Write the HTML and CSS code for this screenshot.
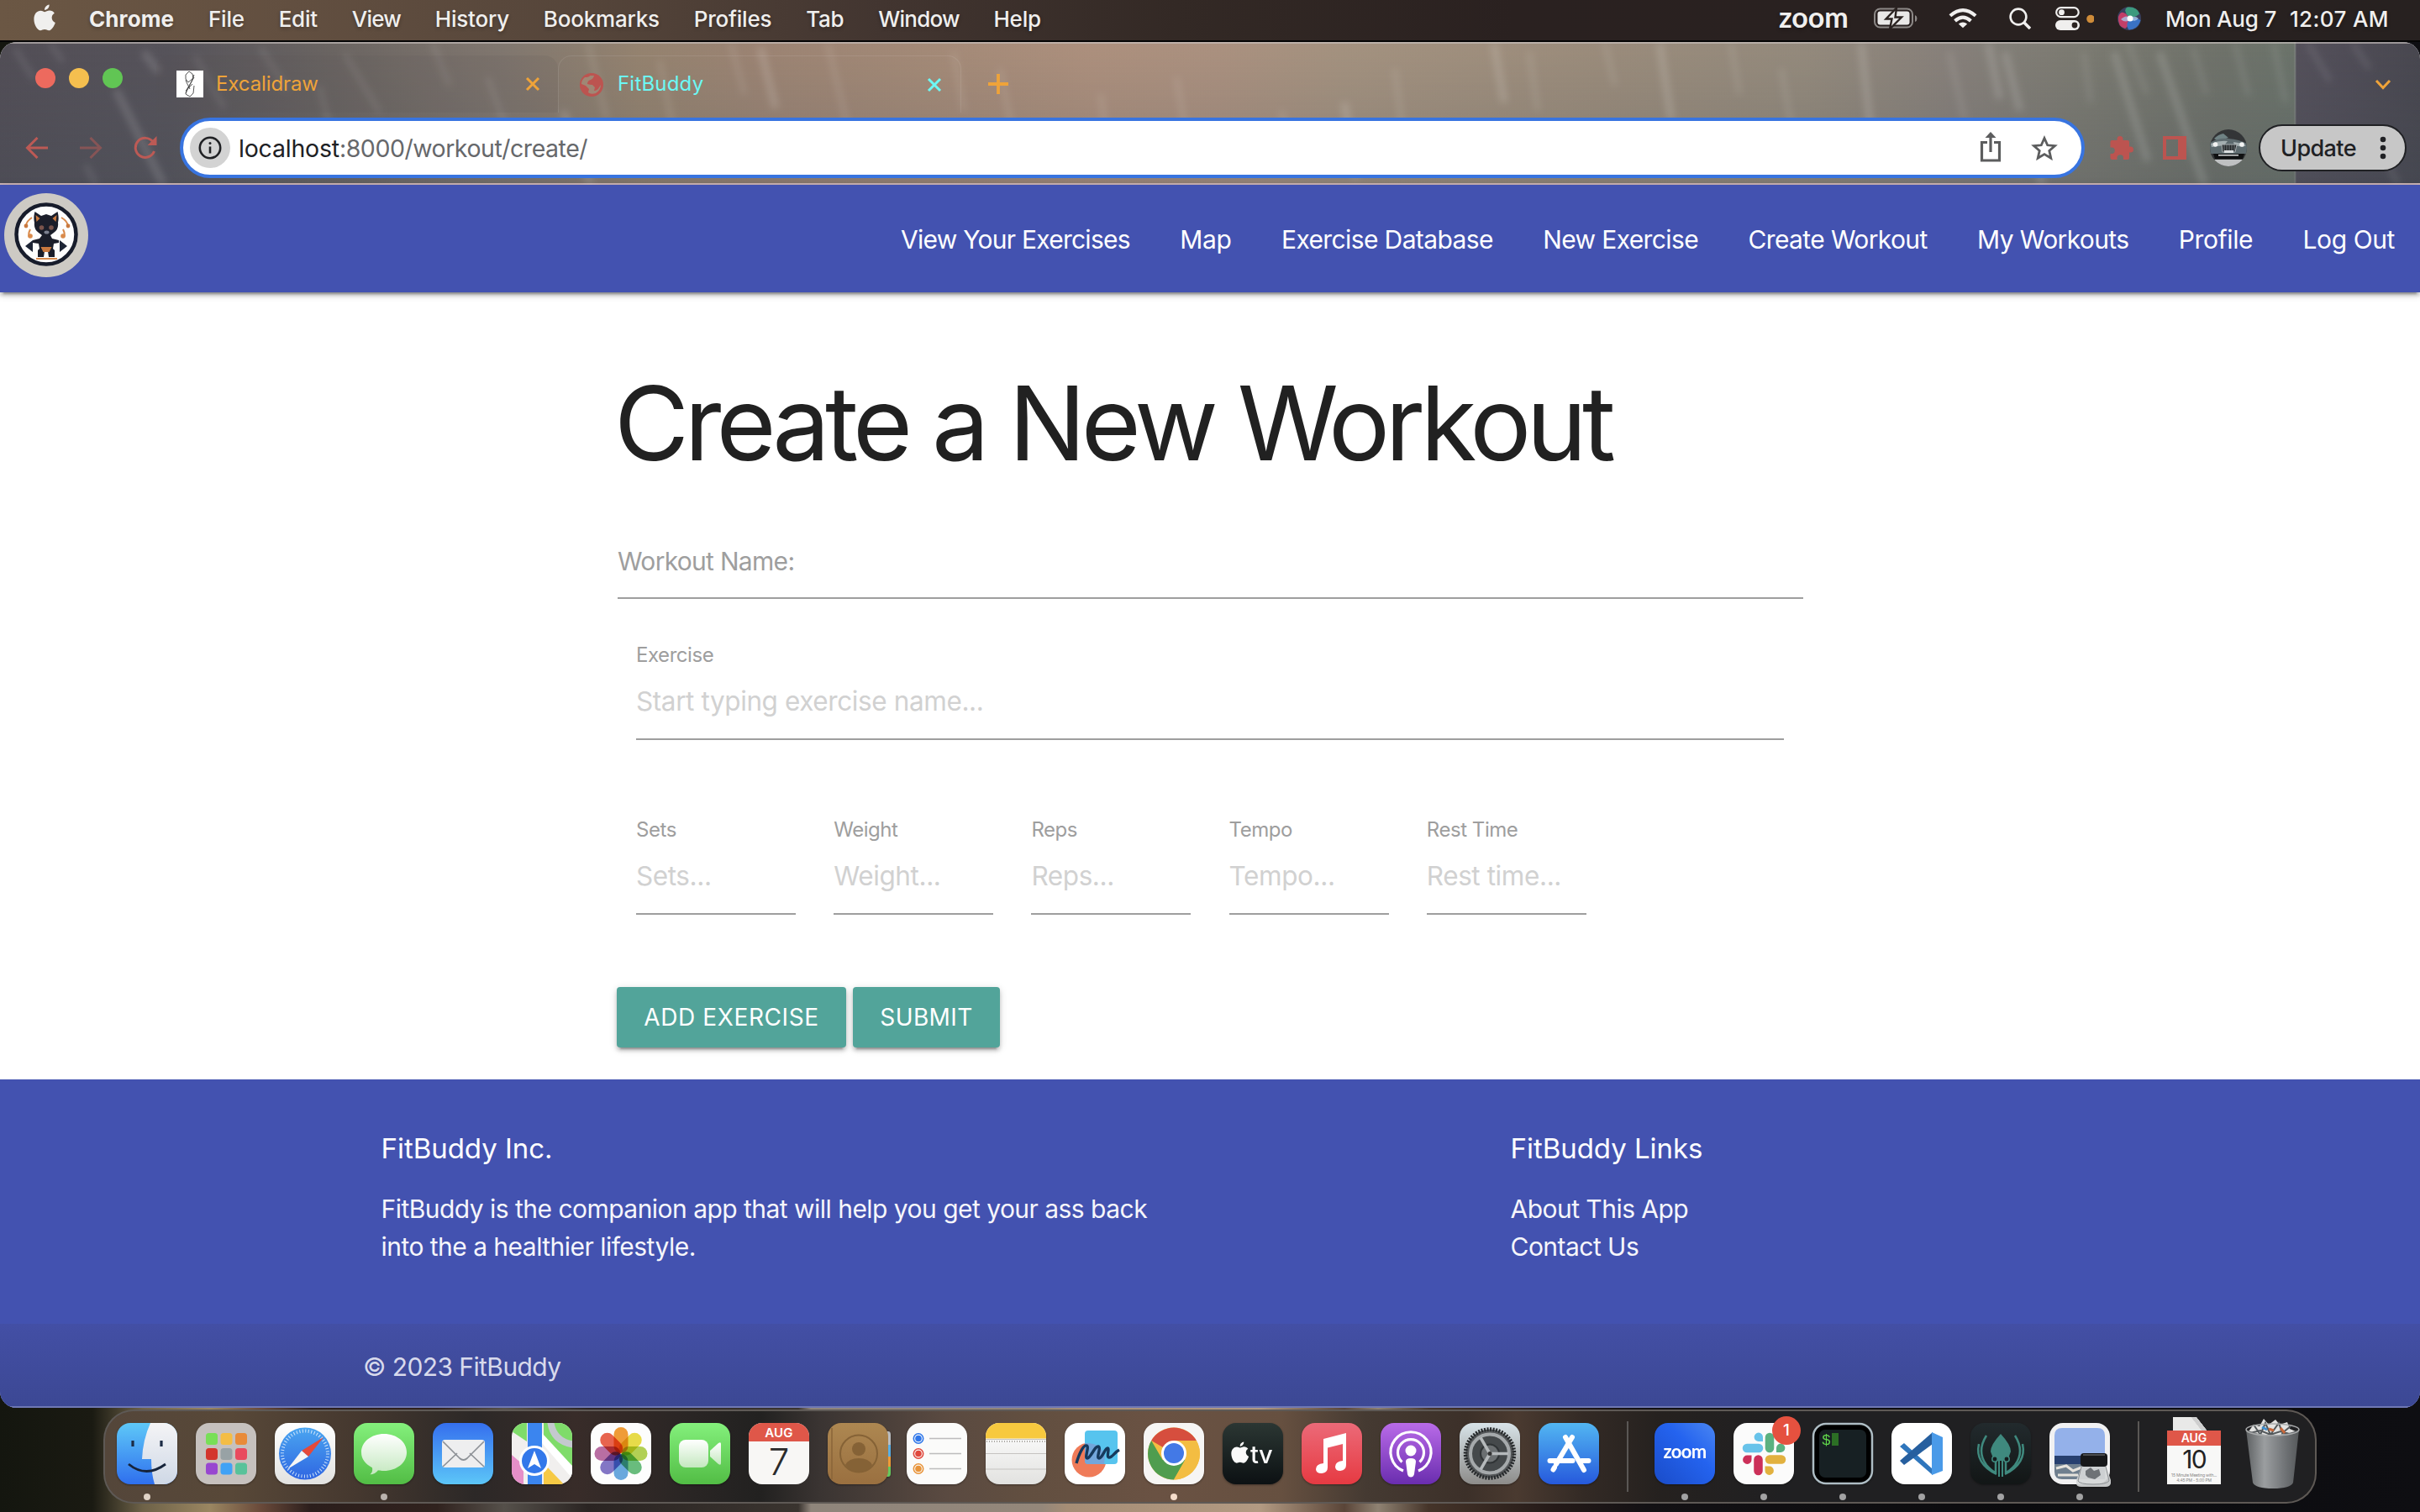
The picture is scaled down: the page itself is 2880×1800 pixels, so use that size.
FILE: index.html
```html
<!DOCTYPE html>
<html lang="en">
<head>
<meta charset="utf-8">
<title>FitBuddy</title>
<link rel="stylesheet" href="styles.css">
</head>
<body>
<svg class="defs" width="0" height="0" aria-hidden="true">
  <defs>
    <linearGradient id="gFinder" x2="0" y2="1"><stop stop-color="#5ec8f8"/><stop offset="1" stop-color="#2f6fee"/></linearGradient>
    <linearGradient id="gFinderR" x2="0" y2="1"><stop stop-color="#f4f4f6"/><stop offset="1" stop-color="#cfd8e6"/></linearGradient>
    <linearGradient id="gWhite" x2="0" y2="1"><stop stop-color="#fff"/><stop offset="1" stop-color="#e2e2e0"/></linearGradient>
    <linearGradient id="gBubble" x2="0" y2="1"><stop stop-color="#fff"/><stop offset="1" stop-color="#c4e8bf"/></linearGradient>
    <linearGradient id="gBlue" x2="0" y2="1"><stop stop-color="#4aa5f0"/><stop offset="1" stop-color="#2f66e2"/></linearGradient>
    <linearGradient id="gGreen" x2="0" y2="1"><stop stop-color="#84f07c"/><stop offset="1" stop-color="#52bd45"/></linearGradient>
    <linearGradient id="gMail" x2="0" y2="1"><stop stop-color="#356fee"/><stop offset="1" stop-color="#5cc6f8"/></linearGradient>
    <linearGradient id="gBrown" x2="0" y2="1"><stop stop-color="#ad8751"/><stop offset="1" stop-color="#9a7040"/></linearGradient>
    <linearGradient id="gTv" x2="0" y2="1"><stop stop-color="#2b3633"/><stop offset="1" stop-color="#0c1113"/></linearGradient>
    <linearGradient id="gMusic" x2="0" y2="1"><stop stop-color="#ec6a78"/><stop offset="1" stop-color="#e63a42"/></linearGradient>
    <linearGradient id="gPod" x2="0" y2="1"><stop stop-color="#b96be8"/><stop offset="1" stop-color="#6a2daf"/></linearGradient>
    <linearGradient id="gSet" x2="0" y2="1"><stop stop-color="#d8e3e8"/><stop offset="1" stop-color="#8d8c8a"/></linearGradient>
    <linearGradient id="gStore" x2="0" y2="1"><stop stop-color="#52b6f2"/><stop offset="1" stop-color="#2659dc"/></linearGradient>
    <linearGradient id="gZoom" x1="1" x2="0" y2="1"><stop stop-color="#4a86f2"/><stop offset=".4" stop-color="#2463ef"/><stop offset="1" stop-color="#1a4cc8"/></linearGradient>
    <linearGradient id="gKraken" x2="0" y2="1"><stop stop-color="#222a2d"/><stop offset="1" stop-color="#121616"/></linearGradient>
    <linearGradient id="gCan" x2="1"><stop stop-color="#5e6163"/><stop offset=".35" stop-color="#9b9ea0"/><stop offset=".7" stop-color="#74777a"/><stop offset="1" stop-color="#55585a"/></linearGradient>
    <radialGradient id="gSiri"><stop stop-color="#fff"/><stop offset=".35" stop-color="#8fb7dc"/><stop offset=".7" stop-color="#4868a8"/><stop offset="1" stop-color="#39405e"/></radialGradient>
    <filter id="soft" x="-5%" y="-5%" width="110%" height="110%"><feGaussianBlur stdDeviation="4"/></filter>
    <clipPath id="tile"><rect width="72" height="73" rx="16"/></clipPath>
    <clipPath id="round44"><circle cx="22" cy="22" r="22"/></clipPath>
  </defs>
</svg>

<header class="menubar">
  <svg class="apple" width="26" height="33" viewBox="0 0 26 33"><path fill="#f0efee" d="M18.6.5c.3 3.300-2.300 6.300-5.500 6.500C12.700 3.900 15.500.9 18.600.500zM13.300 9.200c1.400 0 3.100-1.600 5.700-1.600 2.300 0 4.600 1.200 5.800 3.200-4.700 2.600-3.900 9.200 1 11.100-1.500 4.400-4.600 9.400-7.700 9.400-2 0-2.700-1.200-5-1.200s-3.200 1.200-5 1.200C4.600 31.300.4 24.600.4 17.800c0-6.400 3.900-10 8-10 2.300 0 3.800 1.400 4.900 1.400z"/></svg>
  <nav class="menus">
    <b>Chrome</b><span>File</span><span>Edit</span><span class="tight">View</span><span>History</span><span>Bookmarks</span><span>Profiles</span><span>Tab</span><span class="tight">Window</span><span>Help</span>
  </nav>
  <div class="status">
    <span class="zoom-word">zoom</span>
    <svg class="battery" width="52" height="26" viewBox="0 0 52 26"><rect x="1" y="1.500" width="45" height="22" rx="6.500" fill="none" stroke="#8d8987" stroke-width="2"/><path d="M49 9v8q2.500-1 2.500-4T49 9z" fill="#8d8987"/><rect x="4.500" y="4.500" width="38" height="16" rx="3" fill="#e9e8e7"/><path d="M27 .5 14.500 13.500h7L19 25.500 33 11.500h-7.500z" fill="#e9e8e7" stroke="#2a2220" stroke-width="2.400"/></svg>
    <svg class="wifi" width="34" height="26" viewBox="0 0 36 26" fill="none" stroke="#f0efee" stroke-width="4.400"><path d="M2 9.500q16-14 32 0M8 16q10-9 20 0"/><path d="M18 25l-5.500-5q5.500-4.500 11 0z" fill="#f0efee" stroke="none"/></svg>
    <svg class="search" width="26" height="26" viewBox="0 0 26 26" fill="none" stroke="#f0efee" stroke-width="2.600"><circle cx="11" cy="11" r="9.400"/><path d="M18 18l7 7" stroke-width="3.600"/></svg>
    <svg class="control" width="46" height="28" viewBox="0 0 46 28"><rect x="1.200" y="1.200" width="26.500" height="11" rx="5.500" fill="none" stroke="#f0efee" stroke-width="2.200"/><circle cx="7.500" cy="6.700" r="3.400" fill="#f0efee"/><rect y="16" width="29" height="12" rx="6" fill="#f0efee"/><circle cx="23" cy="22" r="3.400" fill="#2a2220"/><circle cx="42" cy="14.500" r="4.800" fill="#cf8c39"/></svg>
    <svg class="siri" width="28" height="28" viewBox="0 0 28 28"><circle cx="14" cy="14" r="14" fill="#39405e"/><path d="M14 13Q5 1 1 12q-1 12 8 14 6-4 5-13z" fill="#c23f68"/><path d="M13 12Q6 3 12 .5q11-1 14 8-5 5-13 3.500z" fill="#3c9a7e"/><path d="M14 15q8-3 13.500 1-3 11-14 11.500Q9 22 14 15z" fill="#3a72c4"/><path d="M4 15q6-6 11-2 6-3 10 1-5 5-10 1-5 5-11 0z" fill="#a8c4e6" opacity=".8"/><circle cx="15" cy="14" r="3.500" fill="#fff"/></svg>
    <span class="date">Mon Aug 7</span><span class="time">12:07 AM</span>
  </div>
</header>

<section class="window">
  <div class="chrome">
    <svg class="streaks" width="2880" height="168" viewBox="0 0 2880 168" preserveAspectRatio="none" fill="none" stroke="#fff" filter="url(#soft)">
      <path stroke-width="6" opacity=".1" d="M18 6l22 36M60 0l15 22M232 15l35 62M310 5l32 50M410 12l42 70M380 50l15 60M102 144l20 40M515 0l20 50M580 40l26 70M700 0l22 90M785 20l18 90M870 0l16 60M985 0l24 100M1135 10l12 70M1190 30l14 70M1310 60l10 80M1400 40l12 70M1525 80l14 60M1660 30l10 80M1820 10l10 70M1910 0l12 50M2060 0l10 60M2120 30l12 70M2320 10l18 80M2480 10l8 60M2533 0l22 60M2610 5l16 55M2660 0l16 62M2706 0l14 70M2747 0l26 45M2800 0l20 30M2840 140l20 40"/>
      <path stroke-width="9" opacity=".14" d="M171 10l18 24M138 55l60 120M905 5l18 72M670 80l34 90M1600 70l14 90M1778 0l12 70M1975 0l14 90M2215 0l12 110M2366 0l14 66M2386 10l18 70M2516 10l40 130M2570 10l54 160M2420 100l10 70"/>
    </svg>
    <div class="tabs">
      <div class="lights"><i class="red"></i><i class="yellow"></i><i class="green"></i></div>
      <div class="tab">
        <svg width="32" height="32" viewBox="0 0 32 32"><path fill="#fff" d="M0 0h32v32H0z"/><path d="M11 5l4-4 4 3 1 5-6 5-3-4zM12 14l-1-3M12 14l4 8M21 5l-3 8-7 14M19 16l-8 8M21 18l-1 9-4 4-5-3 1-5 9-15" fill="none" stroke="#444" stroke-width=".9"/></svg>
        <span>Excalidraw</span>
        <svg class="x" width="18" height="18" viewBox="0 0 18 18"><path d="M2 2l14 14M16 2L2 16" stroke="#efa339" stroke-width="3"/></svg>
      </div>
      <div class="tab active">
        <svg width="28" height="28" viewBox="0 0 28 28"><circle cx="14" cy="14" r="14" fill="#bc5450"/><path d="M17 3q-1 4-4 5-4 1-4 5 3 1 6 1l3 3-1 4q4 0 6-4l2-3q0 6-6 10-6 2-9-1l1-4-4-4-5-2q0-5 4-8 5 0 6-2z" fill="#a08775"/></svg>
        <span>FitBuddy</span>
        <svg class="x" width="18" height="18" viewBox="0 0 18 18"><path d="M2 2l14 14M16 2L2 16" stroke="#6cf8f5" stroke-width="3"/></svg>
      </div>
      <svg class="plus" width="24" height="24" viewBox="0 0 24 24"><path d="M12 0v24M0 12h24" stroke="#efa339" stroke-width="3.800"/></svg>
      <svg class="chev" width="20" height="14" viewBox="0 0 20 14"><path d="M2 2l8 8.500L18 2" fill="none" stroke="#efa339" stroke-width="3"/></svg>
    </div>
    <div class="toolbar">
      <svg class="back" width="28" height="26" viewBox="0 0 28 26" fill="none" stroke="#bc5a55" stroke-width="3"><path d="M27 13H3M14.500 1L2.500 13l12 12"/></svg>
      <svg class="fwd" width="28" height="26" viewBox="0 0 28 26" fill="none" stroke="#bc5a55" stroke-width="3" opacity=".5"><path d="M0 13h24M12.500 1l12 12-12 12"/></svg>
      <svg class="reload" width="28" height="28" viewBox="0 0 28 28" fill="none" stroke="#bc5a55" stroke-width="3"><path d="M24.500 18a11.500 11.500 0 1 1-1.500-11"/><path d="M27.500 0v11h-11z" fill="#bc5a55" stroke="none"/></svg>
      <div class="omnibox">
        <span class="info"><svg width="28" height="28" viewBox="0 0 28 28" fill="none" stroke="#202124" stroke-width="2.600"><circle cx="14" cy="14" r="12.200"/><path d="M14 12.500v8" /><circle cx="14" cy="8.500" r="1.500" fill="#202124" stroke="none"/></svg></span>
        <span class="url"><em>localhost</em>:8000/workout/create/</span>
        <svg class="share" width="26" height="36" viewBox="0 0 26 36" fill="none" stroke="#5c5d5e" stroke-width="3.200"><path d="M9 12.500H2.500V34h21V12.500H17M13 24V4"/><path d="M13 0l6.500 7h-13z" fill="#5c5d5e" stroke="none"/></svg>
        <svg class="star" width="32" height="30" viewBox="0 0 32 30"><path d="M16 3.500l3.700 8.300 8.800.8-6.700 5.900 2 8.800-7.800-4.700-7.800 4.700 2-8.800-6.700-5.900 8.800-.8z" fill="none" stroke="#5c5d5e" stroke-width="2.800"/></svg>
      </div>
      <svg class="puzzle" width="28" height="28" viewBox="0 0 28 28"><path fill="#bc5450" d="M8.500 5V3.500a3.500 3.500 0 0 1 7 0V5H21q2 0 2 2v5.500h1.500a3.500 3.500 0 0 1 0 7H23V26q0 2-2 2h-5v-2a3.700 3.700 0 0 0-7.500 0v2H2.500q-2 0-2-2v-5H2a3.700 3.700 0 0 0 0-7.500H.5V7q0-2 2-2z"/></svg>
      <svg class="panel" width="28" height="28" viewBox="0 0 28 28"><path fill="#bc5450" fill-rule="evenodd" d="M0 0h28v28H0zM4 4v20h14V4z"/></svg>
      <svg class="avatar" width="44" height="44" viewBox="0 0 44 44"><g clip-path="url(#round44)"><path fill="#333537" d="M0 0h44v44H0z"/><path fill="#6f8284" d="M5 11q5-5 11-6l6 5-12 4z"/><path fill="#5d6a6e" d="M0 16q9-6 22-5t22 6v12H0z"/><path fill="#a3aeb0" d="M1 17q10-4 20-3l-4 5-15 2zM28 15q9 1 15 4l-4 2-10-2z"/><path fill="#25292b" stroke="#aab1b3" d="M14 18h18l-2 9H15z"/><path d="M17 18v9M20 18v9M23 18v9M26 18v9M29 18v9" stroke="#8b9294" stroke-width=".8"/><path fill="#0f1011" d="M4 29h37l-2 6H6z"/><path fill="#bfc1c2" d="M5 36h36l-6 8H10z"/><path fill="#d9dcdd" d="M17 25h11v3H17zM10 30h24v1.500H10z"/><circle cx="6.500" cy="18" r="2.800" fill="#f3f3f3"/><circle cx="38" cy="18" r="2.800" fill="#f3f3f3"/></g></svg>
      <div class="update"><span>Update</span><svg width="8" height="28" viewBox="0 0 8 28" fill="#202124"><circle cx="4" cy="4" r="3.300"/><circle cx="4" cy="14" r="3.300"/><circle cx="4" cy="24" r="3.300"/></svg></div>
    </div>
  </div>

  <nav class="navbar">
    <svg class="logo" width="100" height="100" viewBox="0 0 100 100"><circle cx="50" cy="50" r="50" fill="#cdcac4"/><circle cx="50" cy="49" r="35.500" fill="#fdfdfd" stroke="#171c2b" stroke-width="4.500"/>
      <path fill="#1b1e2a" d="M36.500 22l7.500 5 6-2 6 2 7.500-5q2 7 .5 13 1 8-5 12l-4 3 2 4 8 2v3l-6 1-1 6 2 2v8h-7l-1-7-2-2-2 2-1 7h-7v-8l2-2-1-6-7-1v-3l8-2 3-4-4-3q-6-4-5-12-1.500-6 .5-13z"/>
      <path fill="#c9793f" d="M37.500 26l5 4-4 4zM62.500 26l-5 4 4 4zM43.500 64h13l-3 6h-7z"/><path fill="#1d2435" d="M34 56v14l-9-7zM66 56v14l9-7z"/>
      <circle cx="44.500" cy="41" r="2.800" fill="#7a544c"/><circle cx="56" cy="41" r="2.800" fill="#7a544c"/><ellipse cx="50.500" cy="46.500" rx="3" ry="2" fill="#7c8190"/><path d="M33 29q-6 4-7 9M68 29q7 4 8 10M31 43q-3 6-1 9M70 43q3 6 1 9M38 78h25" fill="none" stroke="#d98a4b" stroke-width="2"/><circle cx="26" cy="39" r="2.400" fill="#c9793f"/><circle cx="76" cy="39" r="2.400" fill="#c9793f"/><circle cx="31" cy="51" r="2.800" fill="#d98a4b"/><circle cx="70" cy="51" r="2.800" fill="#d98a4b"/></svg>
    <div class="links"><a class="l1">View Your Exercises</a><a class="l0">Map</a><a>Exercise Database</a><a>New Exercise</a><a>Create Workout</a><a>My Workouts</a><a class="l2">Profile</a><a class="l2">Log Out</a></div>
  </nav>

  <main class="page">
    <h1>Create a New Workout</h1>
    <div class="name-field">Workout Name:</div>
    <div class="exercise">
      <div class="field"><label>Exercise</label><span>Start typing exercise name...</span></div>
      <div class="row">
        <div class="field"><label>Sets</label><span>Sets...</span></div>
        <div class="field"><label>Weight</label><span>Weight...</span></div>
        <div class="field"><label>Reps</label><span>Reps...</span></div>
        <div class="field"><label>Tempo</label><span>Tempo...</span></div>
        <div class="field"><label>Rest Time</label><span>Rest time...</span></div>
      </div>
    </div>
    <div class="buttons"><button>ADD EXERCISE</button><button class="submit">SUBMIT</button></div>
  </main>

  <footer class="footer">
    <div class="cols">
      <div><h5>FitBuddy Inc.</h5><p>FitBuddy is the companion app that will help you get your ass back<br>into the a healthier lifestyle.</p></div>
      <div><h5>FitBuddy Links</h5><p>About This App<br>Contact Us</p></div>
    </div>
    <div class="copyright">© 2023 FitBuddy</div>
  </footer>
</section>

<section class="dock">
  <div class="app run"><svg viewBox="0 0 72 73"><g clip-path="url(#tile)"><path fill="url(#gFinder)" d="M0 0h72v73H0z"/><path fill="url(#gFinderR)" d="M40 0Q31 20 30 43h11q0 17 4 30h27V0z"/></g><path d="M19 21v7M53 21v7" stroke="#1c2b45" stroke-width="3.200"/><path d="M14 49q21 17 44 0" fill="none" stroke="#16233a" stroke-width="2.800"/></svg></div>
  <div class="app"><svg viewBox="0 0 72 73"><rect width="72" height="73" rx="16" fill="#c6c1be"/><g><rect x="12" y="12" width="14" height="14" rx="3.500" fill="#78df57"/><rect x="29.500" y="12" width="14" height="14" rx="3.500" fill="#f4bd45"/><rect x="47" y="12" width="14" height="14" rx="3.500" fill="#e98b39"/><rect x="12" y="30" width="14" height="14" rx="3.500" fill="#d3352c"/><rect x="29.500" y="30" width="14" height="14" rx="3.500" fill="#98a2a5"/><rect x="47" y="30" width="14" height="14" rx="3.500" fill="#e94a5e"/><rect x="12" y="47.500" width="14" height="14" rx="3.500" fill="#9847d0"/><rect x="29.500" y="47.500" width="14" height="14" rx="3.500" fill="#41a2f5"/><rect x="47" y="47.500" width="14" height="14" rx="3.500" fill="#58c29a"/></g></svg></div>
  <div class="app"><svg viewBox="0 0 72 73"><rect width="72" height="73" rx="16" fill="url(#gWhite)"/><circle cx="36" cy="36.500" r="31" fill="url(#gBlue)"/><circle cx="36" cy="36.500" r="27" fill="none" stroke="#cfe4fa" stroke-width="4" stroke-dasharray="1 2.530"/><path fill="#e5493a" d="M58 17L32 33l8 7z"/><path fill="#f5f5f5" d="M15 55l17-22 8 7z"/></svg></div>
  <div class="app run dim"><svg viewBox="0 0 72 73"><rect width="72" height="73" rx="16" fill="url(#gGreen)"/><path fill="url(#gBubble)" d="M36 13c15 0 27 9.500 27 22S51 57 36 57c-3 0-5 0-7-.7-2 3-6 5-9.500 5 2.500-2 3-5 2.500-8C14 49 9 43 9 35c0-12.500 12-22 27-22z"/></svg></div>
  <div class="app"><svg viewBox="0 0 72 73"><rect width="72" height="73" rx="16" fill="url(#gMail)"/><rect x="11" y="20" width="51" height="33" rx="3.500" fill="#eeeeef"/><path d="M12 22l20 20q4.500 4 9 0l20-20M12 52l17-16M61 52L44 36" fill="none" stroke="#8d9196" stroke-width="1.700"/></svg></div>
  <div class="app"><svg viewBox="0 0 72 73"><g clip-path="url(#tile)"><path fill="#f1efee" d="M0 0h72v73H0z"/><path fill="#7fdc6a" d="M0 0h18v22L0 10zM38 0h34v60L38 24z"/><path fill="#e58fc8" d="M0 38l14 12v23H0z"/><path fill="#3b85ef" d="M19 0h17v73H19z"/><path fill="#fff" d="M36 24l36 42v-15L36 12z"/><path fill="#f6c945" d="M38 48l24 25H38z"/><path d="M46-4q2 27 30 30" fill="none" stroke="#c4c9cf" stroke-width="8"/><circle cx="27" cy="45" r="18" fill="#fff"/><circle cx="27" cy="45" r="15" fill="#3378ea"/><path fill="#fff" d="M27 33l8 21-8-5-8 5z"/></g></svg></div>
  <div class="app"><svg viewBox="0 0 72 73"><rect width="72" height="73" rx="16" fill="#fdfdfd"/><g class="petals"><rect x="27.500" y="5" width="17" height="31" rx="8.500" fill="#f1982d"/><rect x="27.500" y="5" width="17" height="31" rx="8.500" fill="#e8dc3f" transform="rotate(45 36 36.500)"/><rect x="27.500" y="5" width="17" height="31" rx="8.500" fill="#b0d04b" transform="rotate(90 36 36.500)"/><rect x="27.500" y="5" width="17" height="31" rx="8.500" fill="#62bb77" transform="rotate(135 36 36.500)"/><rect x="27.500" y="5" width="17" height="31" rx="8.500" fill="#62a5de" transform="rotate(180 36 36.500)"/><rect x="27.500" y="5" width="17" height="31" rx="8.500" fill="#7d70c4" transform="rotate(225 36 36.500)"/><rect x="27.500" y="5" width="17" height="31" rx="8.500" fill="#b8679f" transform="rotate(270 36 36.500)"/><rect x="27.500" y="5" width="17" height="31" rx="8.500" fill="#e85d44" transform="rotate(315 36 36.500)"/></g></svg></div>
  <div class="app"><svg viewBox="0 0 72 73"><rect width="72" height="73" rx="16" fill="url(#gGreen)"/><rect x="11" y="20" width="35" height="33" rx="8" fill="url(#gBubble)"/><path fill="url(#gBubble)" d="M48 33l10-9q3-2 3 1v23q0 3-3 1l-10-9z"/></svg></div>
  <div class="app cal"><span class="mon">AUG</span><span class="day">7</span></div>
  <div class="app"><svg viewBox="0 0 76 73"><path fill="#b9bcc0" d="M66 10h6q3 0 3 4v12h-9z"/><path fill="#58aee4" d="M66 26h9v14h-9z"/><path fill="#ee9a36" d="M66 40h9v12h-9z"/><path fill="#65c95d" d="M66 52h9v8q0 4-3 4h-6z"/><rect width="72" height="73" rx="16" fill="url(#gBrown)"/><path d="M5 6v61" stroke="#8a6538" stroke-width="1.500"/><circle cx="37" cy="36.500" r="22" fill="none" stroke="#856236" stroke-width="2"/><circle cx="37" cy="31" r="8" fill="#856236"/><path fill="#856236" d="M21 50q4-8 16-8t16 8q-6 8.500-16 8.500T21 50z"/></svg></div>
  <div class="app"><svg viewBox="0 0 72 73"><rect width="72" height="73" rx="16" fill="#fbfbfa"/><path d="M27 18.500h38M27 36.500h38M27 54.500h38" stroke="#bdbcbd" stroke-width="1.600"/><g fill="none" stroke-width="1.600"><circle cx="14" cy="18.500" r="5.700" stroke="#2f77ea"/><circle cx="14" cy="36.500" r="5.700" stroke="#e0483d"/><circle cx="14" cy="54.500" r="5.700" stroke="#e8943a"/></g><circle cx="14" cy="18.500" r="3.800" fill="#2f77ea"/><circle cx="14" cy="36.500" r="3.800" fill="#e0483d"/><circle cx="14" cy="54.500" r="3.800" fill="#e8943a"/></svg></div>
  <div class="app"><svg viewBox="0 0 72 73"><g clip-path="url(#tile)"><path fill="url(#gWhite)" d="M0 0h72v73H0z"/><path fill="#f7c93f" d="M0 0h72v18.500H0z"/></g><path d="M0 19.500h72M0 36.500h72M0 55h72" stroke="#c5c3c0" stroke-width="1.200"/><path d="M1 22h70" stroke="#aaa7a2" stroke-width="2" stroke-dasharray="1 2"/></svg></div>
  <div class="app"><svg viewBox="0 0 72 73"><rect width="72" height="73" rx="16" fill="#fff"/><circle cx="29" cy="44" r="20.500" fill="#ef7b59"/><rect x="24" y="9" width="39" height="40" rx="4" fill="#57c4ee"/><path fill="#7a9fd6" d="M24 24q19-1 24 15l-1 10H28q-4 0-4-4z" opacity=".8"/><path d="M14 48c4-14 9-22 12-21 4 1-3 15 1 15s9-15 13-14-3 14 1 14 7-12 10-12-2 11 2 11 6-6 12-9" fill="none" stroke="#16395c" stroke-width="3.400"/></svg></div>
  <div class="app run warm"><svg viewBox="0 0 72 73"><rect width="72" height="73" rx="16" fill="#f6f5f4"/><circle cx="36" cy="36.500" r="31" fill="#f3bd42"/><path fill="#d64e3e" d="M36 36.500L9.200 21A31 31 0 0 1 62.800 21H36z"/><path fill="#4f9d4f" d="M9.200 21A31 31 0 0 0 36 67.500L49.400 44 36 36.500 22.600 44z"/><path fill="#f3bd42" d="M62.800 21A31 31 0 0 1 36 67.500L49.400 44 48 21z"/><circle cx="36" cy="36" r="15" fill="#fff"/><circle cx="36" cy="36" r="12" fill="#4379e6"/></svg></div>
  <div class="app tv"><svg viewBox="0 0 72 73"><rect width="72" height="73" rx="16" fill="url(#gTv)"/><path fill="#fafafa" transform="translate(10 22) scale(.82)" d="M18.600.500c.3 3.300-2.300 6.300-5.500 6.500C12.700 3.900 15.500.9 18.600.500zM13.300 9.200c1.400 0 3.100-1.600 5.700-1.600 2.300 0 4.600 1.200 5.800 3.200-4.700 2.600-3.900 9.200 1 11.100-1.500 4.400-4.600 9.400-7.700 9.400-2 0-2.700-1.200-5-1.200s-3.200 1.200-5 1.200C4.600 31.300.4 24.600.4 17.800c0-6.400 3.900-10 8-10 2.300 0 3.800 1.400 4.900 1.400z"/><text x="33" y="48" class="tvt">tv</text></svg></div>
  <div class="app"><svg viewBox="0 0 72 73"><rect width="72" height="73" rx="16" fill="url(#gMusic)"/><path fill="#fff" d="M26 19l27-7v38q0 6-7 7-6 0-6-5 0-6 9-7V25l-18 4.500V53q0 6-7 7-7 0-7-5 0-6 9-7z"/></svg></div>
  <div class="app"><svg viewBox="0 0 72 73"><rect width="72" height="73" rx="16" fill="url(#gPod)"/><g fill="none" stroke="#fff" stroke-width="3.200"><path d="M27 57A24 24 0 1 1 45 57"/><path d="M25.500 46.500A15.500 15.500 0 1 1 46.500 46.500"/></g><circle cx="36" cy="33" r="6.500" fill="#fff"/><path fill="#fff" d="M30 46q0-4 6-4t6 4l-2 15q-1 3.500-4 3.500T32 61z"/></svg></div>
  <div class="app"><svg viewBox="0 0 72 73"><rect width="72" height="73" rx="16" fill="url(#gSet)"/><circle cx="36" cy="36.500" r="29" fill="#55585a" stroke="#26292b" stroke-width="4.500" stroke-dasharray="2 1.500"/><circle cx="36" cy="36.500" r="23" fill="#45494b" stroke="#a5a9ab" stroke-width="4"/><circle cx="36" cy="36.500" r="11" fill="#6b6f71" stroke="#303436" stroke-width="2"/><path d="M36 36.500h22M36 36.500L25 17.500M36 36.500L25 55.500" stroke="#b5b9bb" stroke-width="3.500"/><circle cx="36" cy="36.500" r="2.500" fill="#333"/></svg></div>
  <div class="app"><svg viewBox="0 0 72 73"><rect width="72" height="73" rx="16" fill="url(#gStore)"/><path d="M40 17L21 49M17.500 55.500L19 53M32 17l22 39M13.500 45h27M51 45h8.500" fill="none" stroke="#fff" stroke-width="6" stroke-linecap="round"/></svg></div>
  <i class="sep"></i>
  <div class="app run gray zoomapp"><svg viewBox="0 0 72 73"><rect width="72" height="73" rx="16" fill="url(#gZoom)"/><text x="36" y="42" class="zt">zoom</text></svg></div>
  <div class="app run gray"><svg viewBox="0 0 72 73"><rect width="72" height="73" rx="16" fill="#fbfbfb"/><g stroke-width="10.500" stroke-linecap="round" fill="none"><path d="M16 30h14" stroke="#68c3ea"/><path d="M43 17v13" stroke="#5bb180"/><path d="M43 43.500h14" stroke="#e2b13f"/><path d="M29.500 43.500V57" stroke="#cc3059"/></g><path fill="#68c3ea" d="M35 22h-5a5.200 5.200 0 1 1 5-5z"/><path fill="#5bb180" d="M51 35v-5a5.200 5.200 0 1 1 5 5z"/><path fill="#e2b13f" d="M37.500 51.500h5a5.200 5.200 0 1 1-5 5z"/><path fill="#cc3059" d="M21.500 38.500v5a5.200 5.200 0 1 1-5-5z"/></svg><b class="badge">1</b></div>
  <div class="app run gray"><svg viewBox="0 0 72 73"><rect x="1" y="1" width="70" height="71" rx="15" fill="#000" stroke="#aebdc4" stroke-width="2.500"/><rect x="8" y="8" width="56" height="57" rx="7" fill="#172023"/><text x="11" y="26" class="prompt">$</text><path fill="#2c6f25" d="M23 12h8v15h-8z"/></svg></div>
  <div class="app run gray"><svg viewBox="0 0 72 73"><rect width="72" height="73" rx="16" fill="#fff"/><path fill="#2f76bd" d="M15 24l34 31v7L10 28z"/><path fill="#265f9f" d="M10 45l39-34v14L15 50z"/><path fill="#4a9ae8" d="M48 11l13 6v40l-13 5z"/></svg></div>
  <div class="app run gray"><svg viewBox="0 0 72 73"><rect width="72" height="73" rx="16" fill="url(#gKraken)"/><path fill="#3f897e" d="M36 13q12 13 12 21l-3 8q2 2 1 4l-7-1v19h-2V45h-2v19h-2V45l-7 1q-1-2 1-4l-3-8q0-8 12-21z"/><g fill="none" stroke="#3f897e" stroke-width="2.500"><path d="M19 15Q7 34 19 50q6 7 11 9V46M53 15q12 19 0 35-6 7-11 9V46M10 25Q5 48 31 61M62 25q5 23-21 36"/></g><circle cx="29" cy="43" r="3.200" fill="#151b1c" stroke="#3f897e" stroke-width="1.500"/><circle cx="43" cy="43" r="3.200" fill="#151b1c" stroke="#3f897e" stroke-width="1.500"/></svg></div>
  <div class="app run gray"><svg viewBox="0 0 72 73"><rect width="72" height="73" rx="16" fill="#f1f1f2"/><path fill="#94b1ea" d="M15 6h42q9 0 9 9v25H6V15q0-9 9-9z"/><path fill="#27406f" d="M6 39h60v10H6z"/><path fill="#6f7f8e" d="M6 49h60v18H15q-9 0-9-9z"/><path d="M8 54l12-3 8 6 10-4M10 62h24" stroke="#e6e3dc" stroke-width="3" fill="none"/><path fill="#d5d7d8" d="M39 50h28l6 18v4q-1 4-6 4H38q-6 0-6-4v-4z" opacity=".92"/><path fill="#6e7276" d="M43 57l6-4 4 4 6-2 2 7-7 5-8-2-3-3z"/><path d="M38 52l-4 17q2 4 18 4t19-4l-4-17" fill="none" stroke="#8c9093"/><rect x="37" y="36" width="32" height="16" rx="4" fill="#17181a"/><path d="M40 38h26" stroke="#4b4d50" stroke-width="2"/></svg></div>
  <i class="sep"></i>
  <div class="doc"><span class="dm">AUG</span><span class="dd">10</span><span class="dt">15 Minute Meeting with...</span><span class="dt">4:45 PM - 5:00 PM</span></div>
  <svg class="trash" width="66" height="85" viewBox="0 0 66 85"><path fill="#e3e3e2" d="M4 16l6-8 7 2 5-9 6 7 8-6 5 6 9-3 3 8 7 3v8H5z"/><path d="M10 8l8 12 6-14 6 14 10-14 4 12 10-8M6 18l12-3 12 5 12-4 14 4" fill="none" stroke="#53585b" stroke-width="2"/><path d="M28 13l6 2M42 12l5 6" stroke="#c8683b" stroke-width="3"/><path d="M20 11l6 3" stroke="#3f8fd0" stroke-width="3"/><path fill="url(#gCan)" d="M1 14q31 13 63 0l-7 63q-3 7-24 7T9 77z"/><ellipse cx="32.500" cy="14" rx="31.500" ry="7" fill="none" stroke="#a9abac" stroke-width="1.500"/></svg>
</section>
</body>
</html>
```
FILE: styles.css
```css
* { box-sizing: border-box; }
html, body { margin: 0; padding: 0; }
body {
  width: 2880px; height: 1800px; overflow: hidden;
  display: flex; flex-direction: column;
  font-family: Inter, "Liberation Sans", sans-serif;
  background: linear-gradient(90deg, #14160f 0, #1a1a12 110px, #6e6248 170px, #9a8661 250px, #6a4a3a 310px, #2b1e1c 370px, #30221e 520px, #55504a 600px, #2a2422 700px, #3a342f 950px, #8f857b 965px, #94877a 1240px, #a58d75 1270px, #b29a82 1500px, #5a4538 1600px, #8f8272 1640px, #453429 1700px, #241a18 1850px, #131114 1960px, #0b0b0e 2400px, #0e0e12 2880px);
}
.defs { position: absolute; }
svg { display: block; flex: none; }

/* macOS menu bar */
.menubar {
  height: 50px; flex: none; display: flex; align-items: center; padding: 0 37px 4px 40px;
  background: linear-gradient(90deg, #6b5744 0, #624f40 350px, #55453a 700px, #423530 1050px, #332925 1400px, #2a2120 1800px, #272120 2880px);
  border-bottom: 2px solid #050505;
  color: #f0efee; font-size: 26px; font-weight: 500; letter-spacing: -.2px; white-space: nowrap;
  text-shadow: 0 2px 4px rgba(0,0,0,.3);
}
.apple { margin: -2px 40px 0 0; }
.menus { display: flex; gap: 40.8px; }
.menus b { font-weight: 700; letter-spacing: .1px; }
.menus .tight { letter-spacing: -.8px; }
.status { margin-left: auto; display: flex; align-items: center; }
.zoom-word { font-family: Lato, Inter, sans-serif; font-weight: 700; font-size: 34px; line-height: 40px; margin: -5px 29px 0 0; letter-spacing: 0; width: 84px; }
.battery { margin-right: 37px; }
.wifi { margin-right: 38px; }
.search { margin-right: 29px; }
.control { margin-right: 28px; }
.siri { margin-right: 29px; }
.date { width: 148px; }
.time { letter-spacing: .4px; }

/* browser window */
.window { flex: none; height: 1626px; border-radius: 20px; overflow: hidden; display: flex; flex-direction: column; background: #fff; }
.chrome {
  position: relative; flex: none; height: 170px; display: flex; flex-direction: column;
  border-top: 2px solid rgba(225,215,210,.55); border-bottom: 2px solid #cdb5b6;
  background:
    linear-gradient(180deg, rgba(60,72,90,0), rgba(60,72,85,.22)),
    linear-gradient(90deg, #524e56 0, #56535a 200px, #6b6562 400px, #81776f 600px, #95836f 760px, #9c8473 900px, #a48a77 1100px, #ad907d 1300px, #ab917f 1450px, #a4927f 1600px, #9b8c7b 1900px, #948a7c 2150px, #87807a 2330px, #7b7a71 2480px, #6f726a 2640px, #6b736a 2730px, #808580 2731px, #54505a 2733px, #4f4c56 2800px, #48474f 2880px);
}
.streaks { position: absolute; left: 0; top: 0; overflow: hidden; }
.tabs { position: relative; height: 82px; display: flex; align-items: center; }
.lights { display: flex; gap: 16px; width: 186px; padding: 0 0 1px 42px; }
.lights i { width: 24px; height: 24px; border-radius: 50%; }
.red { background: #ed6a5e; } .yellow { background: #f5bf4f; } .green { background: #61c554; }
.tab { width: 478px; height: 68px; margin-top: 14px; padding: 0 21px 0 24px; display: flex; align-items: center; color: #efa339; font-size: 24px; letter-spacing: -.1px; background: rgba(90,80,80,.12); border-radius: 16px 16px 0 0; }
.tab span { margin-left: 15px; position: relative; top: -1px; }
.tab .x { margin-left: auto; }
.tab.active { width: 480px; padding: 0 22px 0 25px; color: #6cf8f5; letter-spacing: .2px; background: none; border: 1px solid rgba(255,255,255,.09); border-bottom: 0; }
.tab.active span { margin-left: 17px; }
.plus { margin: 14px 0 0 32px; }
.chev { margin: 15px 34px 0 auto; }
.toolbar { position: relative; height: 84px; display: flex; align-items: center; padding: 0 16px 0 30px; }
.back { margin-right: 37px; } .fwd { margin-right: 36px; } .reload { margin-right: 27px; }
.omnibox { width: 2267px; height: 72px; border: 4px solid #3874e0; border-radius: 36px; background: #fff; display: flex; align-items: center; padding: 0 28px 0 8px; }
.info { width: 48px; height: 48px; border-radius: 50%; background: #d3d3d3; display: grid; place-items: center; }
.url { margin-left: 10px; font-size: 28.500px; letter-spacing: -.47px; color: #66686b; }
.url em { font-style: normal; color: #202124; letter-spacing: -.2px; }
.share { margin: 0 35px 2px auto; }
.puzzle { margin: -1px 35px 0 30px; } .panel { margin-right: 28px; } .avatar { margin-right: 14px; }
.update { width: 176px; height: 56px; border: 2px solid #202124; border-radius: 28px; background: #c7c7c7; display: flex; align-items: center; justify-content: space-between; padding: 0 22px 0 24px; font-size: 27px; font-weight: 450; letter-spacing: -.6px; color: #202124; }

/* site navigation */
.navbar { position: relative; flex: none; height: 128px; background: #4352b0; display: flex; align-items: center; justify-content: space-between; padding: 0 30px 0 5px; box-shadow: 0 4px 4px rgba(0,0,0,.16), 0 2px 10px rgba(0,0,0,.2), 0 6px 2px -4px rgba(0,0,0,.25); }
.logo { margin-top: -8px; }
.links { display: flex; gap: 59.4px; margin-top: 1px; color: #fff; font-size: 30px; letter-spacing: -.62px; white-space: nowrap; }
.links .l0 { letter-spacing: -.3px; }
.links .l1 { letter-spacing: -.75px; }
.links .l2 { letter-spacing: -.4px; }

/* workout form */
.page { flex: none; width: 1411px; height: 937px; margin-left: 735px; padding-top: 89px; color: #9e9e9e; }
h1 { margin: 0 0 75px -4px; font-size: 122px; line-height: 134px; font-weight: 400; letter-spacing: -5.700px; color: #212121; white-space: nowrap; }
.name-field { height: 67px; border-bottom: 2px solid #9e9e9e; font-size: 30px; line-height: 44px; letter-spacing: -.7px; }
.exercise { padding: 52px 23px 0 22px; }
.field { height: 116px; border-bottom: 2px solid #9e9e9e; display: flex; flex-direction: column; white-space: nowrap; }
.field label { font-size: 24px; line-height: 30px; letter-spacing: -.45px; margin-bottom: 17px; }
.field span { font-size: 31.500px; line-height: 46px; letter-spacing: -.4px; color: #d1d1d1; }
.row { display: grid; grid-template-columns: repeat(5, 190px); column-gap: 45.2px; margin-top: 92px; }
.buttons { display: flex; gap: 8px; margin: 86px 0 0 -1px; }
button { width: 273px; height: 72px; padding: 0; border: 0; border-radius: 4px; background: #52a49a; color: #fff; font: 400 28px Inter, sans-serif; letter-spacing: .6px; box-shadow: 0 4px 4px rgba(0,0,0,.16), 0 2px 10px rgba(0,0,0,.16), 0 6px 2px -4px rgba(0,0,0,.25); }
button.submit { width: 175px; letter-spacing: .4px; }

/* site footer */
.footer { flex: none; height: 391px; background: #4352b0; color: #fff; }
.cols { height: 291px; padding: 62px 0 0 453.5px; display: grid; grid-template-columns: 1344px 1fr; }
h5 { margin: 0 0 30px; font-size: 33px; line-height: 40px; font-weight: 400; letter-spacing: -.04px; }
.cols p { margin: 0; font-size: 30px; line-height: 45px; letter-spacing: -.53px; color: #f6f6fb; white-space: nowrap; }
.copyright { height: 100px; padding-left: 432px; font-size: 30px; line-height: 102px; letter-spacing: -.58px; color: #d8daec; background: linear-gradient(180deg, #434fa5, #3c4894); border-bottom: 2px solid #6f78b4; }

/* dock */
.dock { position: relative; flex: none; width: 2634px; height: 112px; margin: 2px 0 0 123px; border: 2px solid rgba(150,145,140,.4); border-radius: 36px; padding: 14px 0 0 14px; display: flex; gap: 22px; align-items: flex-start;
  background: linear-gradient(90deg, #54463a 0, #584838 150px, #45382f 300px, #2c2827 440px, #382c29 560px, #292524 700px, #222120 780px, #3a3432 850px, #5a4a41 1000px, #624f40 1100px, #6a5243 1250px, #665040 1400px, #453a32 1500px, #3c3029 1620px, #4a3a30 1680px, #332a25 1760px, #25211f 1850px, #202022 2000px, #202022 2633px) padding-box, #3a3431; }
.app { width: 72px; height: 94px; display: flex; flex-direction: column; align-items: center; }
.app svg { width: 72px; height: 73px; overflow: visible; filter: drop-shadow(0 1px 1px rgba(0,0,0,.35)); }
.app:nth-child(10) svg { width: 76px; margin-left: 4px; }
.petals rect { mix-blend-mode: multiply; opacity: .95; }
.run::after { content: ""; width: 8px; height: 8px; margin-top: 11px; border-radius: 50%; background: #e0d3c6; }
.run.dim::after { background: #b9b2ad; } .run.warm::after { background: #f4dccb; } .run.gray::after { background: #a2a2a3; }
.cal { height: 73px; border-radius: 16px; overflow: hidden; background: #f8f7f5; }
.mon { width: 72px; height: 22px; background: #df5749; color: #fff; font-size: 15px; font-weight: 600; line-height: 24px; text-align: center; letter-spacing: .2px; }
.day { color: #2b2b2b; font-size: 44px; font-weight: 300; line-height: 48px; }
.tvt { fill: #fafafa; font: 500 29px Inter, sans-serif; letter-spacing: -.5px; }
.zt { fill: #fff; font: 700 22px Lato, sans-serif; text-anchor: middle; letter-spacing: -.6px; }
.prompt { fill: #5fd24a; font: 18px "Liberation Mono", monospace; }
.sep { width: 2px; height: 84px; margin: -2px 9px 0 11px; background: #5a5755; }
.app:has(.badge) { position: relative; }
.badge { position: absolute; left: 46px; top: -8px; width: 34px; height: 34px; border-radius: 50%; background: #e5513f; color: #fff; font-size: 19px; font-weight: 500; line-height: 34px; text-align: center; }
.doc { width: 64px; height: 80px; margin: -7px 0 0 2px; padding-top: 16px; display: flex; flex-direction: column; align-items: center; background: linear-gradient(#df5749, #df5749) 0 16px / 64px 18px no-repeat, linear-gradient(#f8f8f7, #f8f8f7) 0 34px / 64px 46px no-repeat, linear-gradient(52deg, #e9e9e8 0 62%, #cfcfcf 63% 74%, transparent 75%) 7px 0 / 42px 16px no-repeat; }
.dm { color: #fff; font-size: 14px; font-weight: 600; line-height: 18px; }
.dd { color: #222; font-size: 30px; line-height: 32px; letter-spacing: -1.800px; }
.dt { color: #888; font-size: 5px; line-height: 6px; white-space: nowrap; letter-spacing: -.2px; }
.trash { margin: -6px 0 0 7px; }
```
